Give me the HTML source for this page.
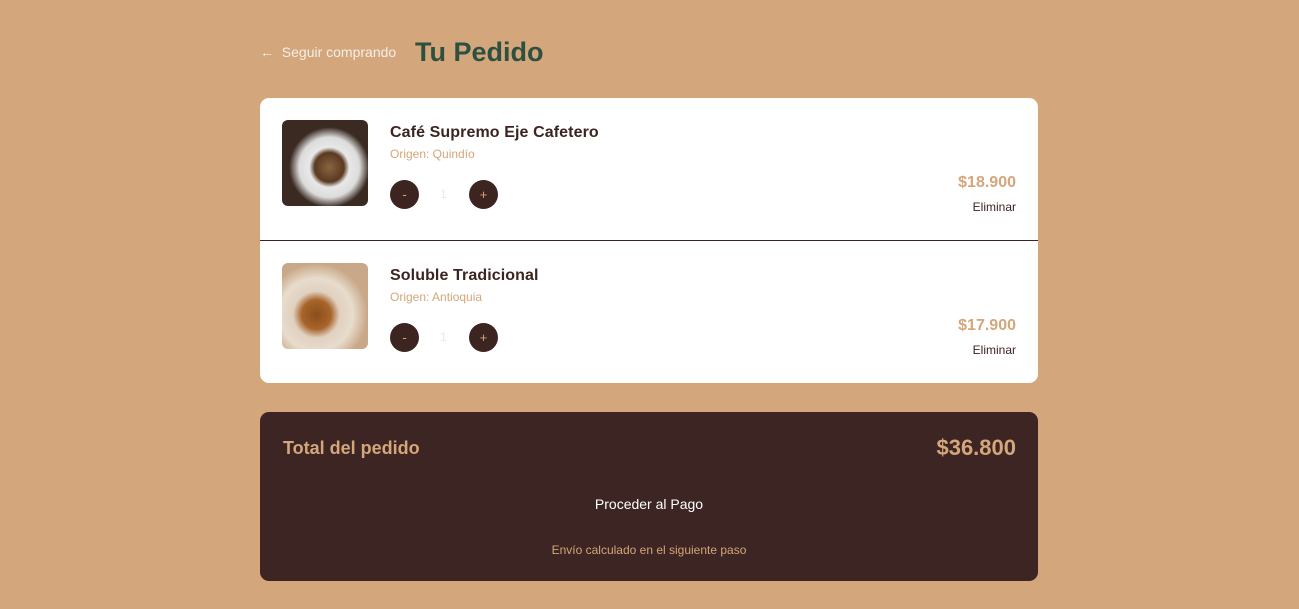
<!DOCTYPE html>
<html><head><meta charset="utf-8"><style>
body{margin:0;background:#d3a67b;font-family:"Liberation Sans",sans-serif;width:1299px;height:609px;overflow:hidden;position:relative}
.abs{position:absolute}
.card{left:260px;top:98px;width:778px;height:285px;background:#fff;border-radius:9px;overflow:hidden}
.item{position:absolute;left:0;width:778px;height:142px}
.img{position:absolute;left:22px;top:22px;width:86px;height:86px;border-radius:6px}
.name{position:absolute;left:130px;top:26px;font-size:16px;font-weight:bold;color:#3c2420;letter-spacing:.1px}
.orig{position:absolute;left:130px;top:49px;font-size:12px;color:#d3a67b}
.btn{position:absolute;top:82px;width:29px;height:29px;border-radius:50%;background:#3c2420;color:#d3a67b;font-size:13px;text-align:center;line-height:29px}
.qty{position:absolute;left:180px;top:89px;font-size:12px;color:#e8e8ee}
.price{position:absolute;right:22px;top:76px;font-size:16px;font-weight:bold;color:#d3a67b}
.del{position:absolute;right:22px;top:102px;font-size:12px;color:#3c2420}
</style></head><body>
<div class="abs" style="left:260px;top:44px;font-size:14px;color:#f5eee8">&#8592;&nbsp; Seguir comprando</div>
<div class="abs" style="left:415px;top:37px;font-size:27px;font-weight:bold;color:#2d5040">Tu Pedido</div>
<div class="abs card">
 <div class="item" style="top:0">
  <div class="img" style="background:radial-gradient(circle at 55% 55%,#8a6440 0,#5a3a22 22%,#e8e8e8 30%,#dcdcdc 45%,#3a2a22 60%)"></div>
  <div class="name">Café Supremo Eje Cafetero</div>
  <div class="orig">Origen: Quindío</div>
  <div class="btn" style="left:130px">-</div><div class="qty">1</div><div class="btn" style="left:209px">+</div>
  <div class="price">$18.900</div><div class="del">Eliminar</div>
 </div>
 <div class="abs" style="left:0;top:142px;width:778px;height:1px;background:#3c2420"></div>
 <div class="item" style="top:143px">
  <div class="img" style="background:radial-gradient(circle at 40% 60%,#8a4e1c 0,#a8642a 20%,#e0d0c0 32%,#e8dccc 50%,#c8a888 70%)"></div>
  <div class="name">Soluble Tradicional</div>
  <div class="orig">Origen: Antioquia</div>
  <div class="btn" style="left:130px">-</div><div class="qty">1</div><div class="btn" style="left:209px">+</div>
  <div class="price">$17.900</div><div class="del">Eliminar</div>
 </div>
</div>
<div class="abs" style="left:260px;top:412px;width:778px;height:169px;background:#3c2522;border-radius:9px">
 <div class="abs" style="left:23px;top:26px;font-size:18px;font-weight:bold;color:#d3a67b">Total del pedido</div>
 <div class="abs" style="right:22px;top:23px;font-size:22px;font-weight:bold;color:#d3a67b">$36.800</div>
 <div class="abs" style="left:0;width:778px;top:84px;text-align:center;font-size:14px;color:#fff">Proceder al Pago</div>
 <div class="abs" style="left:0;width:778px;top:131px;text-align:center;font-size:12px;color:#d3a67b">Envío calculado en el siguiente paso</div>
</div>
</body></html>
